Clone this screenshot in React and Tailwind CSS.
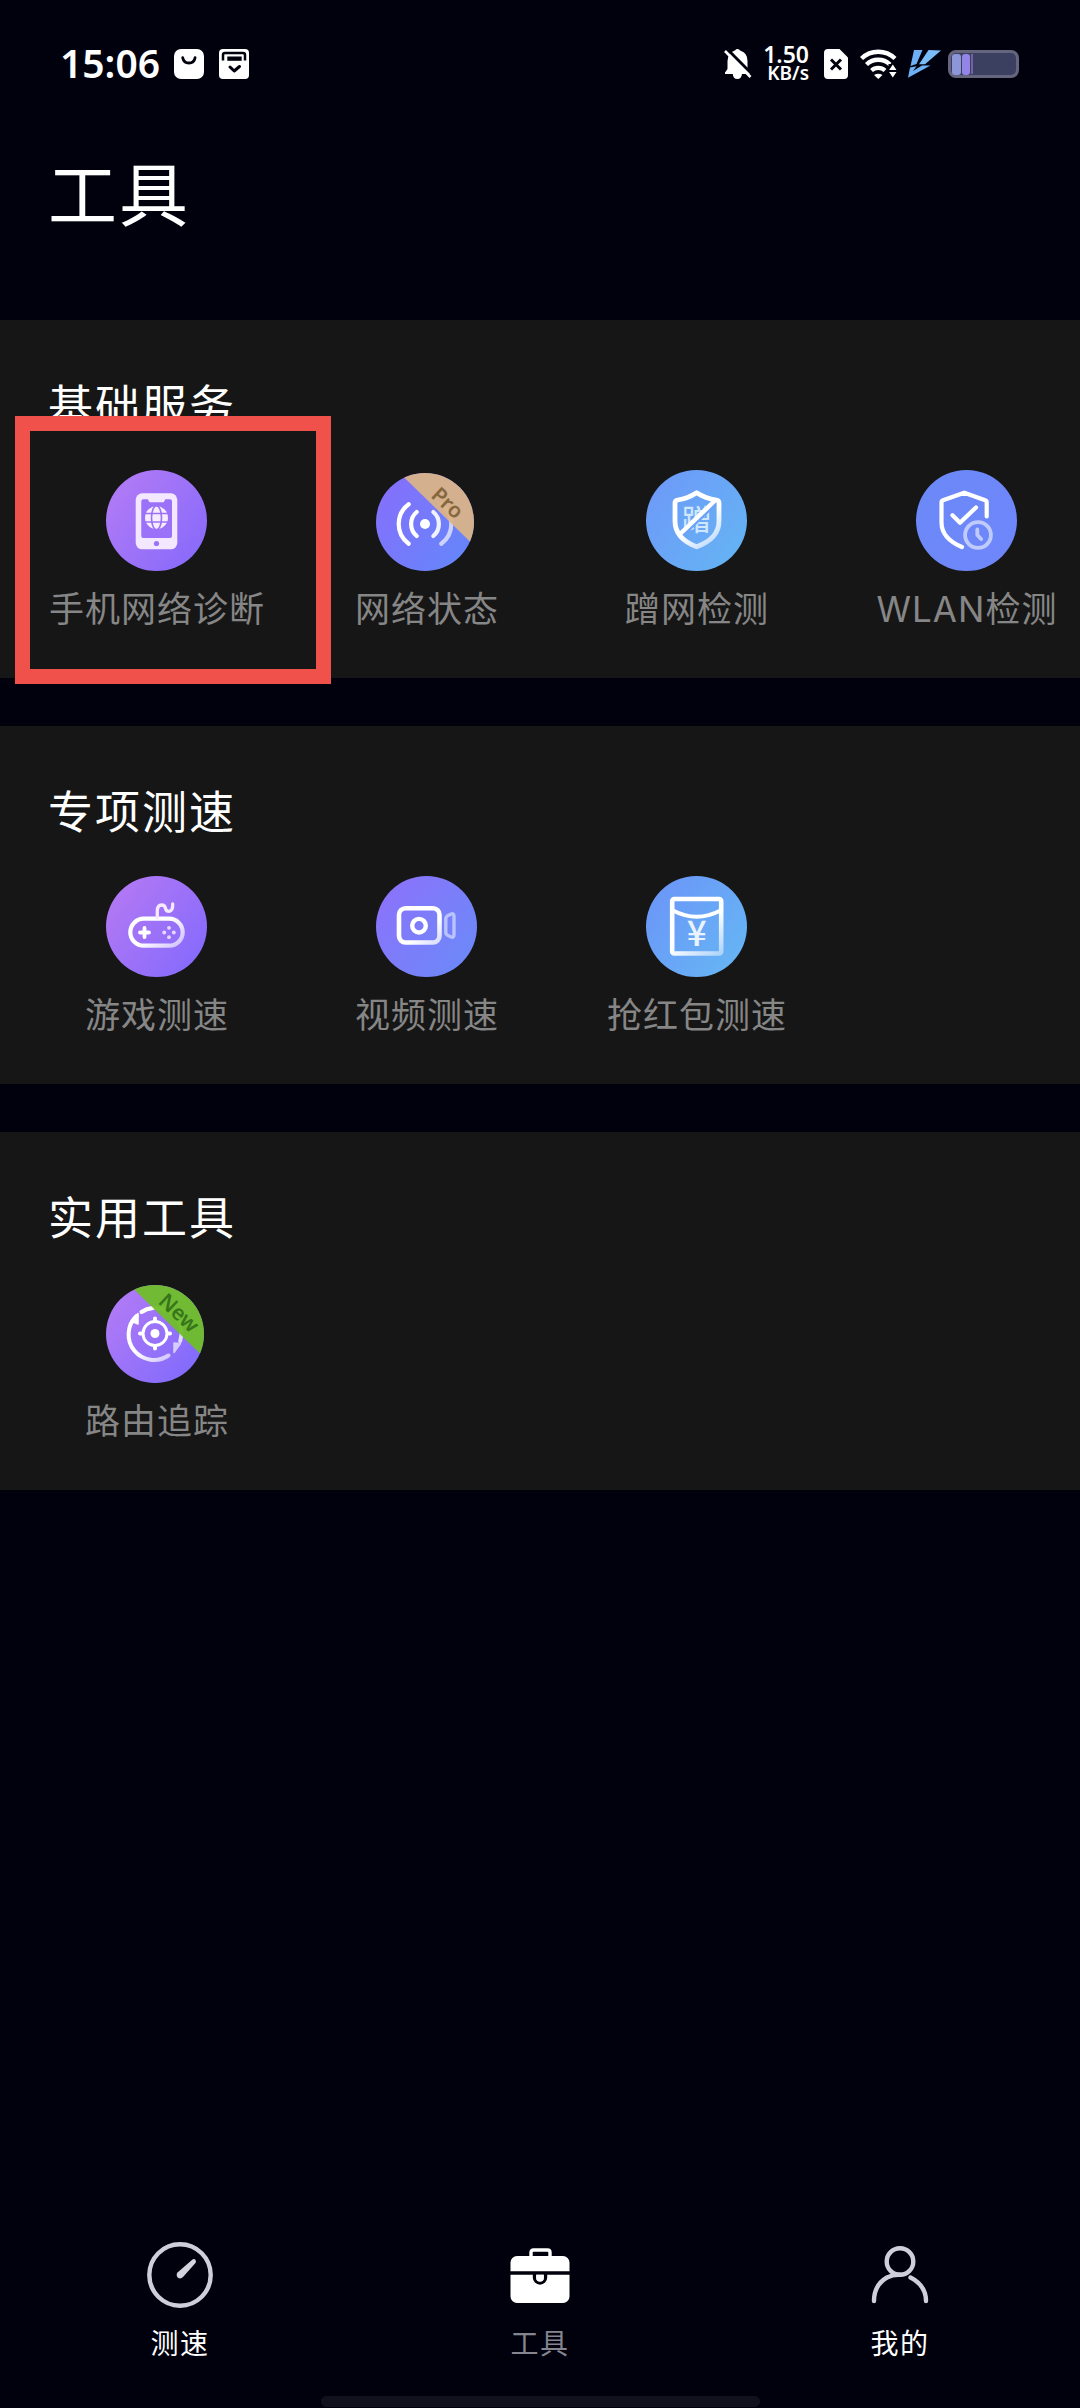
// Tools tab of the network speed test app
import { useId } from 'react';

const CJK = "font-['Noto_Sans_CJK_SC',sans-serif]";

// Round icon base: gradient disc, fading white "ink" gradient for the glyph on top
function Disc({ from, to, badge, children }) {
  const id = useId().replace(/[^a-zA-Z0-9]/g, '');
  const cx = badge ? 49 : 50.5;
  const cy = badge ? 52 : 50.5;
  const r = badge ? 49 : 50.5;
  return (
    <svg width="101" height="101" viewBox="0 0 101 101" fill="none" strokeLinecap="round" strokeLinejoin="round">
      <defs>
        <linearGradient id={`${id}bg`} x1="0.05" y1="0.2" x2="0.9" y2="0.85">
          <stop stopColor={from} />
          <stop offset="1" stopColor={to} />
        </linearGradient>
        <linearGradient id={`${id}ink`} gradientUnits="userSpaceOnUse" x1="35" y1="30" x2="74" y2="80">
          <stop offset="0.45" stopColor="#fff" />
          <stop offset="1" stopColor="#fff" stopOpacity="0.45" />
        </linearGradient>
        <clipPath id={`${id}clip`}>
          <circle cx={cx} cy={cy} r={r} />
        </clipPath>
      </defs>
      <circle cx={cx} cy={cy} r={r} fill={`url(#${id}bg)`} />
      {children(`url(#${id}ink)`)}
      {badge && (
        <g clipPath={`url(#${id}clip)`}>
          <path d="M20 -0.500L100 77.500V-2z" fill={badge.fill} fillOpacity="0.95" />
          <text
            x={badge.x}
            y={badge.y}
            transform={`rotate(43 ${badge.x} ${badge.y})`}
            textAnchor="middle"
            dominantBaseline="central"
            fill={badge.color}
            className="font-['Noto_Sans',sans-serif] text-[21px] font-semibold"
          >
            {badge.text}
          </text>
        </g>
      )}
    </svg>
  );
}

const PhoneIcon = () => (
  <Disc from="#b07af6" to="#8a6bfa">
    {() => (
      <>
        <rect x="29.700" y="23.300" width="41.600" height="56" rx="6.500" fill="#f3e8ff" />
        <path d="M37.500 29.300h4.300l1.700 3h14.200l1.700-3H64q2 0 2 2V66q0 2-2 2H37.300q-2 0-2-2V31.300q0-2 2.200-2z" fill="#9a71f8" />
        <circle cx="50.500" cy="47.700" r="11.500" fill="#f6ecff" />
        <g stroke="#9a71f8" strokeWidth="1.600">
          <ellipse cx="50.500" cy="47.700" rx="5" ry="12" />
          <path d="M38 43.500h25M38 52h25" />
        </g>
        <circle cx="50.500" cy="73.500" r="2.600" fill="#9a71f8" />
      </>
    )}
  </Disc>
);

const SignalIcon = () => (
  <Disc from="#8470fc" to="#6685fa" badge={{ text: 'Pro', fill: '#dab388', color: '#86683f', x: 72, y: 32.500 }}>
    {() => (
      <g stroke="#fff" strokeWidth="4.200">
        <circle cx="49" cy="54" r="5" fill="#fff" stroke="none" />
        <path d="M40.700 42a15.700 15.700 0 0 0 0 24M32.700 34.300a24.400 24.400 0 0 0 0 39.400" />
        <path d="M57.300 42a15.700 15.700 0 0 1 0 24" opacity="0.9" />
        <path d="M65.300 34.300a24.400 24.400 0 0 1 0 39.400" opacity="0.65" />
      </g>
    )}
  </Disc>
);

const FreeloadIcon = () => (
  <Disc from="#6d9bf8" to="#65b2f4">
    {(ink) => (
      <>
        <text x="50.800" y="60.500" textAnchor="middle" fill="#cfe6ff" className="font-['Noto_Sans_CJK_SC',sans-serif] text-[29px] font-medium">蹭</text>
        <path d="M36 66.500L71 33" stroke="#6ba3f7" strokeWidth="2.500" />
        <path d="M33.500 64.500L69.500 30" stroke="#fff" strokeWidth="4.400" />
        <path d="M50.700 22.700q-9 5.800-19 7.300-2.700.4-2.700 3V51q0 17.500 21.700 25.800Q73 68.500 73 51V33q0-2.600-2.700-3-10.600-1.500-19.600-7.300z" stroke={ink} strokeWidth="4.800" />
      </>
    )}
  </Disc>
);

const WlanIcon = () => (
  <Disc from="#6c89f8" to="#6e86fa">
    {() => (
      <>
        <path d="M70.700 46.500V32.500q0-1.600-1.500-2.200L48.300 22.700 27 30.300q-1.500.6-1.500 2.200V52.500q0 16 20.500 24.500" stroke="#fff" strokeWidth="4.200" />
        <path d="M36.500 45.200l7.500 7.500 16-15.300" stroke="#fff" strokeWidth="4.200" />
        <g stroke="#bfcbfd" strokeWidth="3.800">
          <circle cx="62" cy="65" r="12.900" />
          <path d="M61.300 59.500v5.500l3.800 4" />
        </g>
      </>
    )}
  </Disc>
);

const GameIcon = () => (
  <Disc from="#b278f4" to="#876bfc">
    {(ink) => (
      <>
        <rect x="24.300" y="42.700" width="52.400" height="27" rx="13.500" stroke={ink} strokeWidth="4.200" />
        <path d="M51.300 42v-7q0-6 4.500-6 3 0 3.700 3.300t3.800 3q3.700-.5 3.400-7.500" stroke="#f5e9ff" strokeWidth="3.300" />
        <path d="M38.500 52v9M34 56.500h9" stroke="#fff" strokeWidth="3.800" />
        <g fill="#e6dbff">
          <circle cx="63" cy="51.800" r="1.900" />
          <circle cx="63" cy="61.200" r="1.900" />
          <circle cx="58.200" cy="56.500" r="1.900" />
          <circle cx="67.800" cy="56.500" r="1.900" />
        </g>
      </>
    )}
  </Disc>
);

const VideoIcon = () => (
  <Disc from="#8a73fb" to="#6d88f8">
    {(ink) => (
      <>
        <rect x="23" y="32.300" width="40.500" height="34.200" rx="6.500" stroke={ink} strokeWidth="4.600" />
        <circle cx="43" cy="49.700" r="6.800" stroke="#fff" strokeWidth="4.400" />
        <path d="M69.800 42.500q0-1.500 1.300-2.400l3.600-1.900q3.300-1.400 3.300 2v18.600q0 3.400-3.300 2l-3.600-1.900q-1.300-.9-1.300-2.400z" stroke="#b9c3ff" strokeWidth="3.400" />
      </>
    )}
  </Disc>
);

const RedPacketIcon = () => (
  <Disc from="#6b97f8" to="#66b4f4">
    {(ink) => (
      <>
        <rect x="26.200" y="23" width="49" height="54.500" rx="2" stroke={ink} strokeWidth="4.600" />
        <path d="M27 34.500q23.700 12.500 47.500 0" stroke="#fff" strokeWidth="3.800" />
        <text x="50.700" y="70" textAnchor="middle" fill="#e9f4ff" className="font-['Noto_Sans_CJK_SC',sans-serif] text-[35px] font-medium">¥</text>
      </>
    )}
  </Disc>
);

const TraceIcon = () => (
  <Disc from="#b07af6" to="#826bfc" badge={{ text: 'New', fill: '#6fbe28', color: '#37751a', x: 73.500, y: 30.500 }}>
    {(ink) => (
      <>
        <circle cx="49" cy="51.500" r="4.500" fill="#fff" />
        <g stroke="#fff" strokeWidth="3">
          <circle cx="49" cy="51.500" r="12" />
          <path d="M49 36.500v1M49 65.500v1M34 51.500h1M63 51.500h1" strokeWidth="4" />
        </g>
        <path d="M30.500 34a25.500 25.500 0 0 0 32 39.500" stroke={ink} strokeWidth="4" />
        <path d="M25 39l7-7.500v10.500z" fill="#fff" stroke="#fff" strokeWidth="1.500" />
        <path d="M35.500 30q5-3.500 11.500-4" stroke="#fff" strokeWidth="4" />
        <path d="M50 26a25.500 25.500 0 0 1 24.200 33" stroke="#e4ddff" strokeWidth="4" />
        <path d="M68 61v9.500l6.500-9z" fill="#d5ccff" stroke="#d5ccff" strokeWidth="1.500" />
      </>
    )}
  </Disc>
);

const SECTIONS = [
  {
    title: '基础服务',
    items: [
      { label: '手机网络诊断', Icon: PhoneIcon },
      { label: '网络状态', Icon: SignalIcon },
      { label: '蹭网检测', Icon: FreeloadIcon },
      { label: 'WLAN检测', Icon: WlanIcon },
    ],
  },
  {
    title: '专项测速',
    items: [
      { label: '游戏测速', Icon: GameIcon },
      { label: '视频测速', Icon: VideoIcon },
      { label: '抢红包测速', Icon: RedPacketIcon },
    ],
  },
  {
    title: '实用工具',
    items: [{ label: '路由追踪', Icon: TraceIcon }],
  },
];

function StatusBar() {
  return (
    <div className="flex h-[128px] items-center justify-between pr-[61px] pl-[60px] text-white">
      <div className="flex items-center">
        <span className="mb-[3px] w-[114px] font-['Noto_Sans',sans-serif] text-[39px] leading-none font-semibold">15:06</span>
        <svg width="30" height="30" viewBox="0 0 30 30" fill="none">
          <rect width="30" height="30" rx="7" fill="#fff" />
          <path d="M8.700 8.700q1 5.300 6.200 5.300t6.200-5.300" stroke="#00010d" strokeWidth="2.800" strokeLinecap="round" />
        </svg>
        <svg width="30" height="30" viewBox="0 0 30 30" fill="none" className="ml-[15px]">
          <rect width="30" height="30" rx="4" fill="#fff" />
          <path d="M4 11.500V6q0-2 2-2h18q2 0 2 2v5.500" stroke="#00010d" strokeWidth="2.500" />
          <path d="M8.300 7.500h14.400v4.300H8.300z" fill="#00010d" />
          <path d="M11 18l4.200 4 5.300-4.500" stroke="#00010d" strokeWidth="3" strokeLinecap="round" strokeLinejoin="round" />
        </svg>
      </div>

      <div className="flex items-center">
        <svg width="28" height="30" viewBox="0 0 28 30" fill="none">
          <path d="M13.500 0q2 0 2.500 1.500 7.500 2 7.500 10.500v8l2.500 3.500v1.500H18q-.5 5-4.700 5T8.800 25H1v-1.500L3.500 20v-8q0-4 2-6.500Q8 2 11.300 1.300 11.800 0 13.500 0z" fill="#fff" />
          <path d="M2.500-.5L29 26" stroke="#00010d" strokeWidth="3" />
          <path d="M1 2l25.500 26" stroke="#fff" strokeWidth="2.600" />
        </svg>
        <div className="mb-px ml-[9px] flex w-[48px] flex-col items-end font-['Noto_Sans',sans-serif] font-semibold">
          <span className="text-[23px] leading-[19px]">1.50</span>
          <span className="text-[19px] leading-[19px]">KB/s</span>
        </div>
        <svg width="24" height="30" viewBox="0 0 24 30" fill="none" className="ml-[15px]">
          <path d="M4 0h11.500L24 8.500V26q0 4-4 4H4q-4 0-4-4V4q0-4 4-4z" fill="#fff" />
          <path d="M7 10.500l10 10M17 10.500l-10 10" stroke="#00010d" strokeWidth="3" />
        </svg>
        <svg width="37" height="30" viewBox="0 0 37 30" fill="none" className="ml-3">
          <path d="M1.500 9.500a24 24 0 0 1 33.500 0" stroke="#fff" strokeWidth="4.400" />
          <path d="M6.500 15.500a17 17 0 0 1 23.500 0" stroke="#fff" strokeWidth="4.400" />
          <path d="M11.500 21.500a10 10 0 0 1 13.500 0" stroke="#fff" strokeWidth="4.200" />
          <path d="M14 26q4.300-2.500 8.500 0l-4.200 4z" fill="#fff" />
          <path d="M28.500 15h9v15h-9z" fill="#00010d" />
          <path d="M32.800 15.500l3.700 5.500h-7.400zM32.800 28.500l3.700-5.500h-7.400z" fill="#fff" />
        </svg>
        <svg width="33" height="28" viewBox="0 0 33 28" className="ml-[11px]">
          <path d="M6 0h8.500L8.500 14l-6 2z" fill="#6fb0f5" />
          <path d="M20.500 0L33 .5 17 14.300h-6z" fill="#79bcf8" />
          <path d="M2 17.500l6.500-1.300L5 21l9-5.500h8.500L0 27.800z" fill="#6fb0f5" />
        </svg>
        <div className="ml-[7px] flex h-7 w-[71px] items-center gap-px rounded-[8px] border-[3px] border-[#65667e] bg-[#3c4060] pl-[1px]">
          <span className="h-[21px] w-[9px] rounded-[3px] bg-[#8c96d9]" />
          <span className="h-[21px] w-[8px] rounded-[3px] bg-[#9385e6]" />
          <span className="h-[20px] w-[2px] bg-[#7460a8]" />
        </div>
      </div>
    </div>
  );
}

function Section({ title, items }) {
  return (
    <section className="h-[358px] bg-[#161616]">
      <h2 className="h-[150px] pt-[51px] pl-[48px] text-[45px] leading-[66px] tracking-[2px] text-white">{title}</h2>
      <div className="ml-[21px] grid grid-cols-[repeat(4,270px)]">
        {items.map(({ label, Icon }) => (
          <div key={label} className="flex flex-col items-center">
            <Icon />
            <span className="mt-[14px] ml-[2px] font-['Inter','Noto_Sans_CJK_SC',sans-serif] text-[35px] leading-[48px] tracking-[1px] whitespace-nowrap text-[#868686]">
              {label}
            </span>
          </div>
        ))}
      </div>
    </section>
  );
}

function TabBar() {
  return (
    <nav className="grid grid-cols-3 text-[28px] leading-[36px] tracking-[1.500px] text-white">
      <div className="flex flex-col items-center">
        <svg width="66" height="66" viewBox="0 0 66 66" fill="none">
          <circle cx="33" cy="33" r="30.700" stroke="#cfcfdb" strokeWidth="4.400" />
          <path d="M30.500 30.500L45.500 17.500q2-1 3 .5t0 3L36 35q-2.500 2.500-5.300.5-2-2.500-.2-5z" fill="#d4d4df" />
        </svg>
        <span className="mt-4">测速</span>
      </div>
      <div className="flex flex-col items-center">
        <svg width="66" height="66" viewBox="0 0 66 66" fill="none">
          <path d="M24 16v-5.500q0-2.500 2.500-2.500h14q2.500 0 2.500 2.500V16" stroke="#fff" strokeWidth="3.400" />
          <rect x="3.500" y="14" width="59" height="47" rx="6.500" fill="#fff" />
          <path d="M3 31h60" stroke="#00010d" strokeWidth="3.400" />
          <path d="M27.500 31.500v4a5.500 5.500 0 0 0 11 0v-4" stroke="#00010d" strokeWidth="3.400" />
          <path d="M29.200 32.700h7.600V36a3.800 3.800 0 0 1-7.600 0z" fill="#fff" />
        </svg>
        <span className="mt-4 text-[#85858f]">工具</span>
      </div>
      <div className="flex flex-col items-center">
        <svg width="66" height="66" viewBox="0 0 66 66" fill="none" stroke="#cfcfdb" strokeWidth="4.400" strokeLinecap="round">
          <circle cx="33" cy="19.500" r="13.300" />
          <path d="M7 59q0-16 13-23.500 6-3 13-2.700M43.500 35.500Q59 43.500 59 59" />
        </svg>
        <span className="mt-4">我的</span>
      </div>
    </nav>
  );
}

export default function App() {
  return (
    <div className={`${CJK} relative flex h-[2408px] w-[1080px] flex-col overflow-hidden bg-[#00010d]`}>
      <StatusBar />
      <h1 className="h-[192px] pt-[13px] pl-[48px] text-[69px] leading-[100px] tracking-[2px] text-white">工具</h1>

      <main className="flex flex-col gap-12">
        {SECTIONS.map((s) => (
          <Section key={s.title} {...s} />
        ))}
      </main>

      <div className="mt-auto">
        <TabBar />
        <div className="mx-auto mt-9 mb-[1px] h-[11px] w-[439px] rounded-full bg-[#10111c]" />
      </div>

      {/* highlight around the diagnosis entry */}
      <div className="absolute top-[416px] left-[15px] h-[268px] w-[316px] border-[15px] border-[#f0524b]" />
    </div>
  );
}
